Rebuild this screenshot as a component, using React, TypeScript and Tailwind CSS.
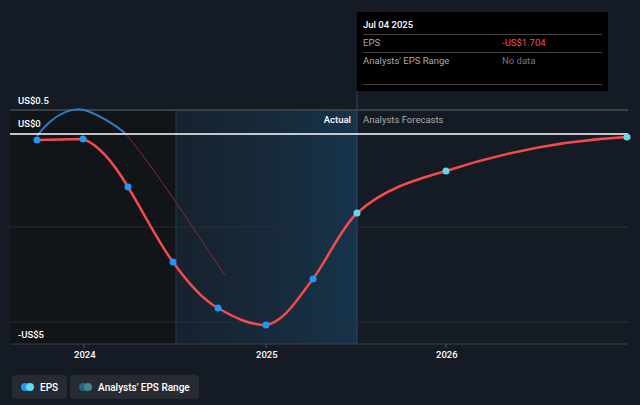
export default function App() {
  const f = { fontFamily: "Roboto, 'Liberation Sans', sans-serif" };
  return (
    <div className="relative w-[640px] h-[405px] bg-[#151b24] overflow-hidden" style={f}>
      <svg className="absolute left-0 top-0" width="640" height="405">
        <defs>
          <linearGradient id="g" x1="0" x2="1" y1="0" y2="0">
            <stop offset="0" stopColor="#1a3144" stopOpacity="0.3" />
            <stop offset="1" stopColor="#173a55" stopOpacity="0.8" />
          </linearGradient>
        </defs>
        <rect x="10" y="110" width="166" height="234" fill="#111419" />
        <rect x="176" y="110" width="181" height="234" fill="url(#g)" />
        <line x1="176" y1="110" x2="176" y2="344" stroke="#1e3a50" />
        <line x1="357" y1="91" x2="357" y2="344" stroke="#2a4a66" />
        <line x1="10" y1="110" x2="628" y2="110" stroke="#3a3f47" strokeWidth="2" />
        <line x1="10" y1="227" x2="628" y2="227" stroke="#2a2f37" />
        <line x1="10" y1="322" x2="628" y2="322" stroke="#2a2f37" />
        <line x1="10" y1="344" x2="628" y2="344" stroke="#3a3f47" />
        <line x1="84" y1="344" x2="84" y2="348" stroke="#555" />
        <line x1="266" y1="344" x2="266" y2="348" stroke="#555" />
        <line x1="446" y1="344" x2="446" y2="348" stroke="#555" />
        <path d="M37 136 C55 112 75 105 90 112 C105 118 115 125 125 133" stroke="#2e7bbf" strokeWidth="2" fill="none" />
        <path d="M125 133 C160 175 190 225 225 275" stroke="#8a2a2e" strokeWidth="1" fill="none" />
        <line x1="10" y1="134" x2="628" y2="134" stroke="#ffffff" strokeWidth="1.5" />
        <path d="M37 140 L83 139 C100 145 115 165 128 187 C145 215 160 245 173 262 C188 283 203 300 218 308 C235 318 250 325 266 325 C285 322 300 295 313 279 C330 255 340 230 357 213 C385 188 415 180 446 171 C510 150 570 140 627 137" stroke="#f24b4b" strokeWidth="2.5" fill="none" />
        {[[37,140],[83,139],[128,187],[173,262],[218,308],[266,325],[313,279]].map(([x,y],i)=>(
          <circle key={i} cx={x} cy={y} r="3.5" fill="#2196f3" />
        ))}
        {[[357,213],[446,171],[627,137]].map(([x,y],i)=>(
          <circle key={i} cx={x} cy={y} r="3.5" fill="#62d8e8" />
        ))}
      </svg>
      <div className="absolute left-[18px] top-[94px] text-[9.5px] font-medium text-white">US$0.5</div>
      <div className="absolute left-[18px] top-[117px] text-[9.5px] font-medium text-white">US$0</div>
      <div className="absolute left-[18px] top-[328px] text-[9.5px] font-medium text-white">-US$5</div>
      <div className="absolute right-[289px] top-[113px] text-[9.5px] font-medium text-white">Actual</div>
      <div className="absolute left-[363px] top-[113px] text-[9.5px] text-[#aaa]">Analysts Forecasts</div>
      <div className="absolute left-[74px] top-[348px] text-[9.5px] font-medium text-white">2024</div>
      <div className="absolute left-[256px] top-[348px] text-[9.5px] font-medium text-white">2025</div>
      <div className="absolute left-[436px] top-[348px] text-[9.5px] font-medium text-white">2026</div>
      <div className="absolute left-[357px] top-[12px] w-[251px] h-[79px] bg-black px-[6px] pt-[6px] text-[9.5px]">
        <div className="text-white font-medium pb-[2px] border-b border-[#444]">Jul 04 2025</div>
        <div className="flex border-b border-[#444] py-[1px]"><span className="w-[139px] text-[#aaa]">EPS</span><span className="text-[#ff4d4d]">-US$1.704</span></div>
        <div className="flex py-[1px]"><span className="w-[139px] text-[#aaa]">Analysts' EPS Range</span><span className="text-[#777]">No data</span></div>
        <div className="absolute left-[6px] right-[6px] top-[72px] border-b border-[#444]" />
      </div>
      <div className="absolute left-[12px] top-[375px] flex gap-[3px]">
        <div className="h-[24px] px-[9px] flex items-center gap-[6px] rounded bg-[#262b33] text-[10px] text-white font-medium">
          <span className="flex"><span className="w-[8px] h-[8px] rounded-full bg-[#2196f3]" /><span className="w-[8px] h-[8px] rounded-full bg-[#62d8e8] -ml-[3px]" /></span>EPS
        </div>
        <div className="h-[24px] px-[9px] flex items-center gap-[6px] rounded bg-[#262b33] text-[10px] text-white font-medium">
          <span className="flex"><span className="w-[8px] h-[8px] rounded-full bg-[#2a5f86]" /><span className="w-[8px] h-[8px] rounded-full bg-[#3f8a86] -ml-[3px]" /></span>Analysts' EPS Range
        </div>
      </div>
    </div>
  );
}
